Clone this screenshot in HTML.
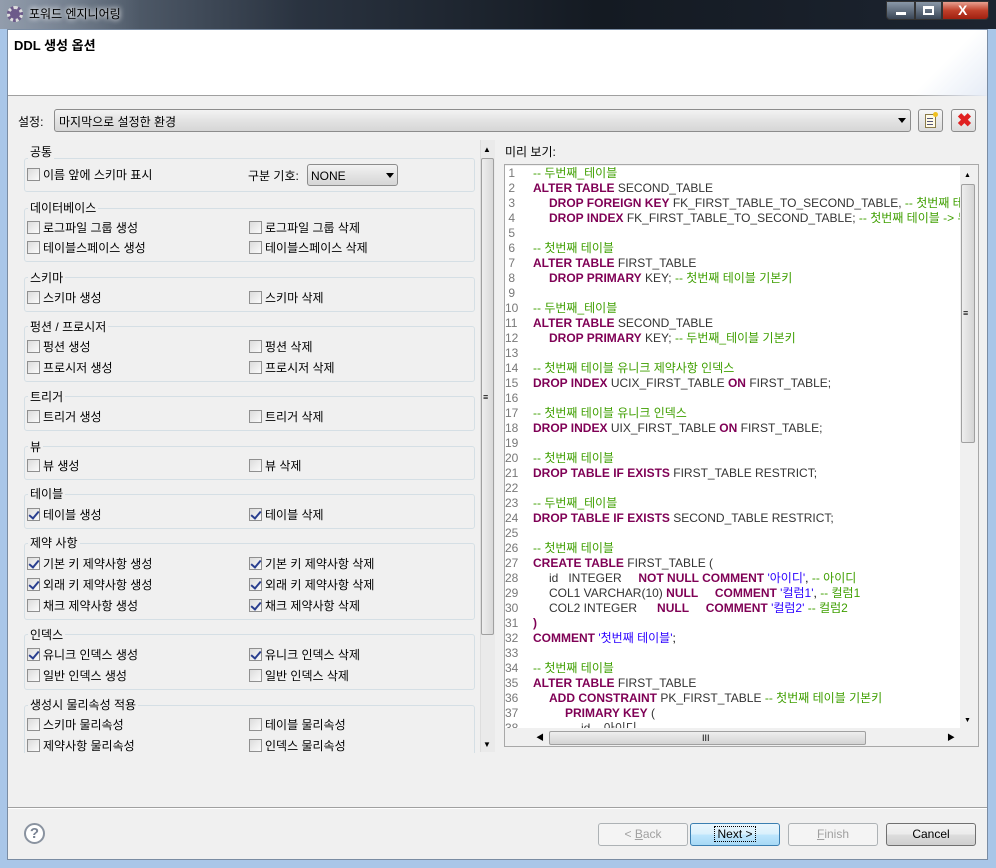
<!DOCTYPE html>
<html><head><meta charset="utf-8">
<style>
*{margin:0;padding:0;box-sizing:border-box}
body{width:996px;height:868px;position:relative;overflow:hidden;background:#6d8fb3;font-family:"Liberation Sans","Noto Sans CJK KR","NanumGothic",sans-serif;font-size:12px;color:#000}
.a{position:absolute}
.t{position:absolute;white-space:nowrap;line-height:14px}
.cb{position:absolute;width:13px;height:13px;border:1px solid #8f8f8f;background:linear-gradient(135deg,#dcdcdc,#fbfbfb)}
.cb.c::after{content:"";position:absolute;left:3px;top:0px;width:4px;height:8px;border-right:2px solid #2a3f8f;border-bottom:2px solid #2a3f8f;transform:rotate(40deg)}
.grp{position:absolute;left:24px;width:451px;border:1px solid #d5dfe5;border-radius:3px}
.gt{position:absolute;left:28px;background:#f0f0f0;padding:0 2px;line-height:14px;white-space:nowrap}
.btn{position:absolute;top:823px;height:23px;width:90px;border:1px solid #707070;border-radius:3px;background:linear-gradient(#f2f2f2 0,#ebebeb 50%,#dddddd 51%,#cfcfcf 100%);text-align:center;line-height:21px}
.btn.d{border-color:#adb2b5;background:#f4f4f4;color:#a0a0a0}
.code{position:absolute;left:505px;top:166px;width:455px;height:562px;overflow:hidden;background:#fff;font-size:12px}
.ln{position:absolute;left:0;width:26px;top:0;height:563px;background:#fff;color:#787878}
.ln div,.src div{height:15px;line-height:15px;white-space:nowrap}
.src{position:absolute;left:28px;top:0}
.src .i1{padding-left:16px}.src .i2{padding-left:32px}.src .i3{padding-left:48px}
.k{color:#7f0055;font-weight:bold}
.c{color:#3f9f00}
.s{color:#2a00ff}
.i{color:#333}
.lbl{position:absolute;white-space:nowrap;line-height:14px}
</style></head><body>
<!-- title bar -->
<div class="a" style="left:0;top:0;width:996px;height:29px;background:linear-gradient(90deg,#6e7a8a 0,#5a6675 8%,#2a3340 30%,#141a22 60%,#1c2430 100%)"></div>
<div class="a" style="left:0;top:0;width:140px;height:29px;background:linear-gradient(90deg,rgba(170,180,195,.6),rgba(170,180,195,0))"></div>
<div class="a" style="left:7px;top:6px;width:16px;height:16px;border-radius:50%;border:3px dotted #ddd;background:#6c5a8a"></div>
<div class="t" style="left:29px;top:7px;color:#000;font-size:12px;text-shadow:0 0 6px #fff,0 0 6px #fff">포워드 엔지니어링</div>
<div class="a" style="left:886px;top:1px;width:29px;height:19px;border:1px solid #333;border-radius:0 0 0 4px;background:linear-gradient(#8a98a8,#3a4656)"></div>
<div class="a" style="left:896px;top:12px;width:10px;height:3px;background:#fff"></div>
<div class="a" style="left:915px;top:1px;width:27px;height:19px;border:1px solid #333;background:linear-gradient(#8a98a8,#3a4656)"></div>
<div class="a" style="left:923px;top:6px;width:11px;height:9px;border:2px solid #fff;border-top-width:3px"></div>
<div class="a" style="left:942px;top:1px;width:47px;height:19px;border:1px solid #333;border-radius:0 0 4px 0;background:linear-gradient(#e8a090,#c0402a 50%,#a02010)"></div>
<div class="t" style="left:958px;top:3px;color:#fff;font-weight:bold;font-size:14px">X</div>
<!-- frame -->
<div class="a" style="left:0;top:29px;width:996px;height:839px;background:#a9c6e8"></div>
<div class="a" style="left:7px;top:29px;width:981px;height:831px;background:#f0f0f0;border:1px solid #7a8ca3"></div>
<!-- header -->
<div class="a" style="left:8px;top:30px;width:979px;height:66px;background:#fff;border-bottom:1px solid #a0a0a0"></div>
<div class="a" style="left:900px;top:30px;width:87px;height:66px;background:linear-gradient(135deg,rgba(255,255,255,0) 50%,#e6ecf6 100%)"></div>
<div class="t" style="left:14px;top:39px;font-weight:bold;font-size:13px">DDL 생성 옵션</div>
<!-- settings -->
<div class="t" style="left:18px;top:115px">설정:</div>
<div class="a" style="left:54px;top:109px;width:857px;height:23px;border:1px solid #8c8c8c;border-radius:3px;background:linear-gradient(#f3f3f3,#e3e3e3 50%,#d6d6d6)"></div>
<div class="t" style="left:59px;top:115px">마지막으로 설정한 환경</div>
<div class="a" style="left:898px;top:118px;width:0;height:0;border-left:4px solid transparent;border-right:4px solid transparent;border-top:5px solid #000"></div>
<div class="a" style="left:918px;top:109px;width:25px;height:23px;border:1px solid #8c8c8c;border-radius:3px;background:linear-gradient(#f6f6f6,#dcdcdc)"></div>
<div class="a" style="left:925px;top:114px;width:11px;height:14px;border:1px solid #8a7a4a;background:#fffbe8"></div>
<div class="a" style="left:927px;top:118px;width:6px;height:1px;background:#557;box-shadow:0 3px #557,0 6px #557"></div>
<div class="a" style="left:933px;top:112px;width:5px;height:5px;background:#f0c020;border-radius:50%"></div>
<div class="a" style="left:951px;top:109px;width:25px;height:23px;border:1px solid #8c8c8c;border-radius:3px;background:linear-gradient(#f6f6f6,#dcdcdc)"></div>
<div class="t" style="left:956px;top:111px;color:#e02020;font-weight:bold;font-size:18px;line-height:18px">✖</div>

<!-- left scrollbar -->
<div class="a" style="left:480px;top:140px;width:15px;height:612px;background:#eaeaea;border-left:1px solid #ddd"></div>
<div class="a" style="left:481px;top:158px;width:13px;height:477px;border:1px solid #a0a0a0;border-radius:2px;background:linear-gradient(90deg,#eee,#d8d8d8)"></div>
<div class="t" style="left:483px;top:143px;font-size:8px">▲</div>
<div class="t" style="left:483px;top:738px;font-size:8px">▼</div>
<div class="t" style="left:483px;top:390px;font-size:9px">≡</div>
<!-- groups -->
<div class="grp" style="top:158px;height:34px"></div><div class="gt" style="top:145px">공통</div>
<div class="grp" style="top:208px;height:54px"></div><div class="gt" style="top:201px">데이터베이스</div>
<div class="grp" style="top:277px;height:35px"></div><div class="gt" style="top:271px">스키마</div>
<div class="grp" style="top:326px;height:56px"></div><div class="gt" style="top:320px">펑션 / 프로시저</div>
<div class="grp" style="top:396px;height:35px"></div><div class="gt" style="top:390px">트리거</div>
<div class="grp" style="top:446px;height:34px"></div><div class="gt" style="top:440px">뷰</div>
<div class="grp" style="top:494px;height:35px"></div><div class="gt" style="top:487px">테이블</div>
<div class="grp" style="top:543px;height:77px"></div><div class="gt" style="top:536px">제약 사항</div>
<div class="grp" style="top:634px;height:56px"></div><div class="gt" style="top:628px">인덱스</div>
<div class="grp" style="top:705px;height:60px"></div><div class="gt" style="top:698px">생성시 물리속성 적용</div>
<div class="a" style="left:22px;top:753px;width:458px;height:40px;background:#f0f0f0"></div>

<div class="cb" style="left:27px;top:168px"></div><div class="t" style="left:43px;top:168px">이름 앞에 스키마 표시</div>
<div class="t" style="left:248px;top:169px">구분 기호:</div>
<div class="a" style="left:307px;top:164px;width:91px;height:22px;border:1px solid #8c8c8c;border-radius:3px;background:linear-gradient(#f3f3f3,#e3e3e3 50%,#d6d6d6)"></div>
<div class="t" style="left:311px;top:169px">NONE</div>
<div class="a" style="left:386px;top:173px;border-left:4px solid transparent;border-right:4px solid transparent;border-top:5px solid #000"></div>

<div class="cb" style="left:27px;top:221px"></div><div class="t" style="left:43px;top:221px">로그파일 그룹 생성</div>
<div class="cb" style="left:249px;top:221px"></div><div class="t" style="left:265px;top:221px">로그파일 그룹 삭제</div>
<div class="cb" style="left:27px;top:241px"></div><div class="t" style="left:43px;top:241px">테이블스페이스 생성</div>
<div class="cb" style="left:249px;top:241px"></div><div class="t" style="left:265px;top:241px">테이블스페이스 삭제</div>

<div class="cb" style="left:27px;top:291px"></div><div class="t" style="left:43px;top:291px">스키마 생성</div>
<div class="cb" style="left:249px;top:291px"></div><div class="t" style="left:265px;top:291px">스키마 삭제</div>

<div class="cb" style="left:27px;top:340px"></div><div class="t" style="left:43px;top:340px">펑션 생성</div>
<div class="cb" style="left:249px;top:340px"></div><div class="t" style="left:265px;top:340px">펑션 삭제</div>
<div class="cb" style="left:27px;top:361px"></div><div class="t" style="left:43px;top:361px">프로시저 생성</div>
<div class="cb" style="left:249px;top:361px"></div><div class="t" style="left:265px;top:361px">프로시저 삭제</div>

<div class="cb" style="left:27px;top:410px"></div><div class="t" style="left:43px;top:410px">트리거 생성</div>
<div class="cb" style="left:249px;top:410px"></div><div class="t" style="left:265px;top:410px">트리거 삭제</div>

<div class="cb" style="left:27px;top:459px"></div><div class="t" style="left:43px;top:459px">뷰 생성</div>
<div class="cb" style="left:249px;top:459px"></div><div class="t" style="left:265px;top:459px">뷰 삭제</div>

<div class="cb c" style="left:27px;top:508px"></div><div class="t" style="left:43px;top:508px">테이블 생성</div>
<div class="cb c" style="left:249px;top:508px"></div><div class="t" style="left:265px;top:508px">테이블 삭제</div>

<div class="cb c" style="left:27px;top:557px"></div><div class="t" style="left:43px;top:557px">기본 키 제약사항 생성</div>
<div class="cb c" style="left:249px;top:557px"></div><div class="t" style="left:265px;top:557px">기본 키 제약사항 삭제</div>
<div class="cb c" style="left:27px;top:578px"></div><div class="t" style="left:43px;top:578px">외래 키 제약사항 생성</div>
<div class="cb c" style="left:249px;top:578px"></div><div class="t" style="left:265px;top:578px">외래 키 제약사항 삭제</div>
<div class="cb" style="left:27px;top:599px"></div><div class="t" style="left:43px;top:599px">채크 제약사항 생성</div>
<div class="cb c" style="left:249px;top:599px"></div><div class="t" style="left:265px;top:599px">채크 제약사항 삭제</div>

<div class="cb c" style="left:27px;top:648px"></div><div class="t" style="left:43px;top:648px">유니크 인덱스 생성</div>
<div class="cb c" style="left:249px;top:648px"></div><div class="t" style="left:265px;top:648px">유니크 인덱스 삭제</div>
<div class="cb" style="left:27px;top:669px"></div><div class="t" style="left:43px;top:669px">일반 인덱스 생성</div>
<div class="cb" style="left:249px;top:669px"></div><div class="t" style="left:265px;top:669px">일반 인덱스 삭제</div>

<div class="cb" style="left:27px;top:718px"></div><div class="t" style="left:43px;top:718px">스키마 물리속성</div>
<div class="cb" style="left:249px;top:718px"></div><div class="t" style="left:265px;top:718px">테이블 물리속성</div>
<div class="cb" style="left:27px;top:739px"></div><div class="t" style="left:43px;top:739px">제약사항 물리속성</div>
<div class="cb" style="left:249px;top:739px"></div><div class="t" style="left:265px;top:739px">인덱스 물리속성</div>

<!-- right preview -->
<div class="t" style="left:505px;top:145px">미리 보기:</div>
<div class="a" style="left:504px;top:164px;width:475px;height:583px;border:1px solid #a8a8a8;background:#f0f0f0"></div>
<div class="code">
<div class="ln">
<div>&nbsp;1</div><div>&nbsp;2</div><div>&nbsp;3</div><div>&nbsp;4</div><div>&nbsp;5</div><div>&nbsp;6</div><div>&nbsp;7</div><div>&nbsp;8</div><div>&nbsp;9</div><div>10</div><div>11</div><div>12</div><div>13</div><div>14</div><div>15</div><div>16</div><div>17</div><div>18</div><div>19</div><div>20</div><div>21</div><div>22</div><div>23</div><div>24</div><div>25</div><div>26</div><div>27</div><div>28</div><div>29</div><div>30</div><div>31</div><div>32</div><div>33</div><div>34</div><div>35</div><div>36</div><div>37</div><div>38</div>
</div>
<div class="src">
<div class="c">-- 두번째_테이블</div>
<div><span class="k">ALTER TABLE</span> <span class="i">SECOND_TABLE</span></div>
<div class="i1"><span class="k">DROP FOREIGN KEY</span> <span class="i">FK_FIRST_TABLE_TO_SECOND_TABLE,</span> <span class="c">-- 첫번째 테이블 -&gt; 두번째_테이블</span></div>
<div class="i1"><span class="k">DROP INDEX</span> <span class="i">FK_FIRST_TABLE_TO_SECOND_TABLE;</span> <span class="c">-- 첫번째 테이블 -&gt; 두번째_테이블</span></div>
<div>&nbsp;</div>
<div class="c">-- 첫번째 테이블</div>
<div><span class="k">ALTER TABLE</span> <span class="i">FIRST_TABLE</span></div>
<div class="i1"><span class="k">DROP PRIMARY</span> <span class="i">KEY;</span> <span class="c">-- 첫번째 테이블 기본키</span></div>
<div>&nbsp;</div>
<div class="c">-- 두번째_테이블</div>
<div><span class="k">ALTER TABLE</span> <span class="i">SECOND_TABLE</span></div>
<div class="i1"><span class="k">DROP PRIMARY</span> <span class="i">KEY;</span> <span class="c">-- 두번째_테이블 기본키</span></div>
<div>&nbsp;</div>
<div class="c">-- 첫번째 테이블 유니크 제약사항 인덱스</div>
<div><span class="k">DROP INDEX</span> <span class="i">UCIX_FIRST_TABLE</span> <span class="k">ON</span> <span class="i">FIRST_TABLE;</span></div>
<div>&nbsp;</div>
<div class="c">-- 첫번째 테이블 유니크 인덱스</div>
<div><span class="k">DROP INDEX</span> <span class="i">UIX_FIRST_TABLE</span> <span class="k">ON</span> <span class="i">FIRST_TABLE;</span></div>
<div>&nbsp;</div>
<div class="c">-- 첫번째 테이블</div>
<div><span class="k">DROP TABLE IF EXISTS</span> <span class="i">FIRST_TABLE RESTRICT;</span></div>
<div>&nbsp;</div>
<div class="c">-- 두번째_테이블</div>
<div><span class="k">DROP TABLE IF EXISTS</span> <span class="i">SECOND_TABLE RESTRICT;</span></div>
<div>&nbsp;</div>
<div class="c">-- 첫번째 테이블</div>
<div><span class="k">CREATE TABLE</span> <span class="i">FIRST_TABLE (</span></div>
<div class="i1"><span class="i">id &nbsp;&nbsp;INTEGER</span> &nbsp;&nbsp;&nbsp;&nbsp;<span class="k">NOT NULL COMMENT</span> <span class="s">'아이디'</span>, <span class="c">-- 아이디</span></div>
<div class="i1"><span class="i">COL1 VARCHAR(10)</span> <span class="k">NULL</span> &nbsp;&nbsp;&nbsp;&nbsp;<span class="k">COMMENT</span> <span class="s">'컬럼1'</span>, <span class="c">-- 컬럼1</span></div>
<div class="i1"><span class="i">COL2 INTEGER</span> &nbsp;&nbsp;&nbsp;&nbsp;&nbsp;<span class="k">NULL</span> &nbsp;&nbsp;&nbsp;&nbsp;<span class="k">COMMENT</span> <span class="s">'컬럼2'</span> <span class="c">-- 컬럼2</span></div>
<div class="k">)</div>
<div><span class="k">COMMENT</span> <span class="s">'첫번째 테이블'</span>;</div>
<div>&nbsp;</div>
<div class="c">-- 첫번째 테이블</div>
<div><span class="k">ALTER TABLE</span> <span class="i">FIRST_TABLE</span></div>
<div class="i1"><span class="k">ADD CONSTRAINT</span> <span class="i">PK_FIRST_TABLE</span> <span class="c">-- 첫번째 테이블 기본키</span></div>
<div class="i2"><span class="k">PRIMARY KEY</span> <span class="i">(</span></div>
<div class="i3"><span class="i">id &nbsp;&nbsp;&nbsp;아이디</span></div>
</div>
</div>
<!-- editor scrollbars -->
<div class="a" style="left:960px;top:165px;width:16px;height:563px;background:#f0f0f0"></div>
<div class="a" style="left:961px;top:184px;width:14px;height:259px;border:1px solid #a0a0a0;border-radius:2px;background:linear-gradient(90deg,#eee,#d4d4d4)"></div>
<div class="t" style="left:964px;top:169px;font-size:7px">▲</div>
<div class="t" style="left:964px;top:714px;font-size:7px">▼</div>
<div class="t" style="left:963px;top:306px;font-size:9px">≡</div>
<div class="a" style="left:530px;top:728px;width:430px;height:17px;background:#f0f0f0"></div>
<div class="a" style="left:549px;top:731px;width:317px;height:14px;border:1px solid #a0a0a0;border-radius:2px;background:linear-gradient(#eee,#d4d4d4)"></div>
<div class="t" style="left:536px;top:731px;font-size:8px">◀</div>
<div class="t" style="left:947px;top:731px;font-size:8px">▶</div>
<div class="t" style="left:702px;top:731px;font-size:9px">III</div>

<!-- bottom -->
<div class="a" style="left:8px;top:807px;width:979px;height:1px;background:#a0a0a0"></div>
<div class="a" style="left:8px;top:808px;width:979px;height:1px;background:#fff"></div>
<div class="a" style="left:24px;top:823px;width:21px;height:21px;border:2px solid #8a93a0;border-radius:50%;background:#fff;text-align:center;line-height:17px;font-weight:bold;font-size:15px;color:#7a8494">?</div>
<div class="btn d" style="left:598px">&lt; <u>B</u>ack</div>
<div class="btn" style="left:690px;border-color:#3c7fb1;background:linear-gradient(#eaf6fd,#d9f0fc 50%,#bee6fd 51%,#a7d9f5)"><span style="outline:1px dotted #000;padding:0 2px">Next &gt;</span></div>
<div class="btn d" style="left:788px"><u>F</u>inish</div>
<div class="btn" style="left:886px">Cancel</div>
</body></html>
